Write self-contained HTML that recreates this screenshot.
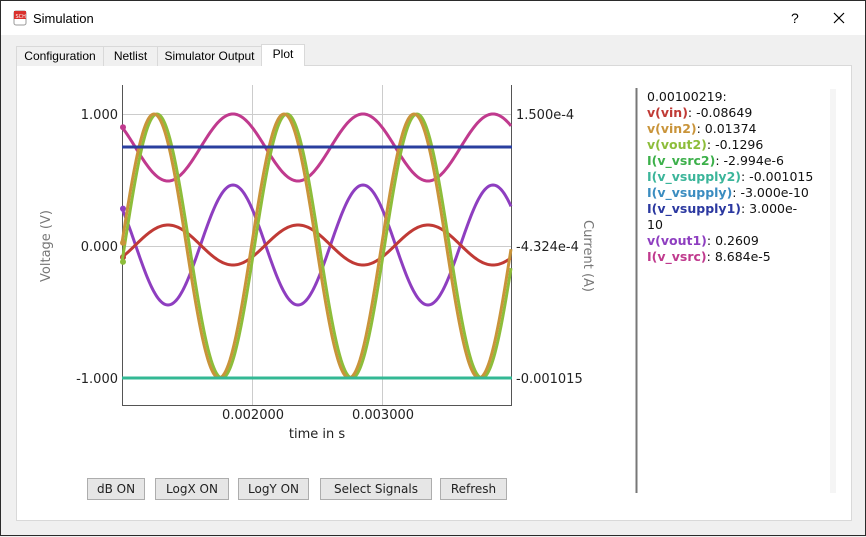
<!DOCTYPE html>
<html><head><meta charset="utf-8"><style>
*{margin:0;padding:0;box-sizing:border-box}
body{width:866px;height:536px;background:#f0f0f0;font-family:"Liberation Sans",sans-serif;font-size:12px;position:relative;overflow:hidden}
.win{position:absolute;left:0;top:0;width:866px;height:536px;border:1px solid #2b2b2b;background:#f0f0f0}
.title{position:absolute;left:0;top:0;width:864px;height:34px;background:#fff}
.tab{position:absolute;top:45px;height:20px;border:1px solid #d9d9d9;border-bottom:none;background:#f0f0f0;font-size:12px;text-align:center;line-height:19px;color:#000}
.pane{position:absolute;left:15px;top:64px;width:836px;height:456px;border:1px solid #d9d9d9;background:#fff}
.inner{position:absolute;left:30px;top:84px;width:806px;height:422px;background:#fff}
.btn{position:absolute;top:477px;height:22px;border:1px solid #adadad;background:#e6e6e6;font-family:"DejaVu Sans",sans-serif;font-size:12px;line-height:20px;text-align:center;color:#222}
.info{position:absolute;left:646px;top:88px;font-family:"DejaVu Sans",sans-serif;font-size:12.5px;line-height:16px;color:#111}
.info b{font-weight:bold}
</style></head><body>
<div class="win">
<div class="title">
 <svg style="position:absolute;left:12px;top:9px" width="14" height="16"><rect x="1" y="1" width="12" height="14" rx="2" fill="#fff" stroke="#999"/><rect x="1" y="1" width="12" height="8" fill="#d9302c"/><text x="2.5" y="8" font-size="5" fill="#fff" font-family="DejaVu Sans">SCH</text></svg>
 <div style="position:absolute;left:32px;top:10px;font-size:13px">Simulation</div>
 <div style="position:absolute;left:790px;top:9px;font-size:14px">?</div>
 <svg style="position:absolute;left:832px;top:11px" width="12" height="12"><path d="M1 1L11 11M11 1L1 11" stroke="#000" stroke-width="1.2"/></svg>
</div>
<div class="pane"></div>
<div class="tab" style="left:15px;width:88px">Configuration</div>
<div class="tab" style="left:102px;width:55px">Netlist</div>
<div class="tab" style="left:156px;width:105px">Simulator Output</div>
<div class="tab" style="left:260px;top:43px;height:22px;width:44px;background:#fff">Plot</div>
<div class="inner"></div>
<svg style="position:absolute;left:0;top:0" width="866" height="536" font-family="DejaVu Sans" font-size="13">
 <g stroke="#ccc" stroke-width="1">
  <line x1="121" y1="113.5" x2="511" y2="113.5"/><line x1="121" y1="245.5" x2="511" y2="245.5"/><line x1="121" y1="377.5" x2="511" y2="377.5"/>
  <line x1="251.5" y1="84" x2="251.5" y2="404"/><line x1="381.5" y1="84" x2="381.5" y2="404"/>
 </g>
 <g stroke="#555" stroke-width="1"><line x1="121.5" y1="84" x2="121.5" y2="404"/><line x1="510.5" y1="84" x2="510.5" y2="404"/><line x1="121" y1="404.5" x2="511" y2="404.5"/></g>
 <g id="curves" fill="none" stroke-width="3"></g>
 <line x1="121" y1="146" x2="511" y2="146" stroke="#2a3f9f" stroke-width="3"/>
 <line x1="121" y1="377" x2="511" y2="377" stroke="#33b894" stroke-width="3"/>
 <g fill="#222" text-anchor="end"><text x="117" y="118">1.000</text><text x="117" y="250">0.000</text><text x="117" y="382">-1.000</text></g>
 <g fill="#222"><text x="515" y="118">1.500e-4</text><text x="515" y="250">-4.324e-4</text><text x="515" y="382">-0.001015</text></g>
 <g fill="#222" text-anchor="middle"><text x="252" y="418">0.002000</text><text x="382" y="418">0.003000</text><text x="316" y="437" font-size="13">time in s</text></g>
 <text transform="translate(49,245) rotate(-90)" text-anchor="middle" fill="#777" font-size="13">Voltage (V)</text>
 <text transform="translate(583,255) rotate(90)" text-anchor="middle" fill="#777" font-size="13">Current (A)</text>
 <line x1="635.5" y1="87" x2="635.5" y2="492" stroke="#777" stroke-width="2"/>
 <line x1="832" y1="88" x2="832" y2="492" stroke="#f5f5f5" stroke-width="6"/>
</svg>
<div class="info">0.00100219:<br>
<b style="color:#c03a35">v(vin)</b>: -0.08649<br>
<b style="color:#c9943a">v(vin2)</b>: 0.01374<br>
<b style="color:#8dbd3a">v(vout2)</b>: -0.1296<br>
<b style="color:#3cb04a">I(v_vsrc2)</b>: -2.994e-6<br>
<b style="color:#3bb59a">I(v_vsupply2)</b>: -0.001015<br>
<b style="color:#3a8cc0">I(v_vsupply)</b>: -3.000e-10<br>
<b style="color:#2b38a0">I(v_vsupply1)</b>: 3.000e-<br>10<br>
<b style="color:#8e3ec0">v(vout1)</b>: 0.2609<br>
<b style="color:#c03a8e">I(v_vsrc)</b>: 8.684e-5</div>
<div class="btn" style="left:86px;width:58px">dB ON</div>
<div class="btn" style="left:154px;width:74px">LogX ON</div>
<div class="btn" style="left:237px;width:71px">LogY ON</div>
<div class="btn" style="left:319px;width:112px">Select Signals</div>
<div class="btn" style="left:439px;width:67px">Refresh</div>
</div>
<script>
var g=document.getElementById('curves');
function sine(c,A,xp,col){var d='';for(var x=121;x<=510;x+=1){var y=c-A*Math.cos(2*Math.PI*(x-xp)/130);d+=(x==121?'M':'L')+x+' '+y.toFixed(2);}
var p=document.createElementNS('http://www.w3.org/2000/svg','path');p.setAttribute('d',d);p.setAttribute('stroke',col);g.appendChild(p);
var c2=document.createElementNS('http://www.w3.org/2000/svg','circle');c2.setAttribute('cx',122);c2.setAttribute('cy',(c-A*Math.cos(2*Math.PI*(121-xp)/130)).toFixed(1));c2.setAttribute('r',3);c2.setAttribute('fill',col);g.appendChild(c2);}
sine(146.5,33.5,232,'#c03a8e');
sine(244,60,232,'#8e3ec0');
sine(244,20,167,'#c03a35');
sine(245,132,286,'#8dbd3a');
sine(245,132,283,'#c9943a');
</script>
</body></html>
